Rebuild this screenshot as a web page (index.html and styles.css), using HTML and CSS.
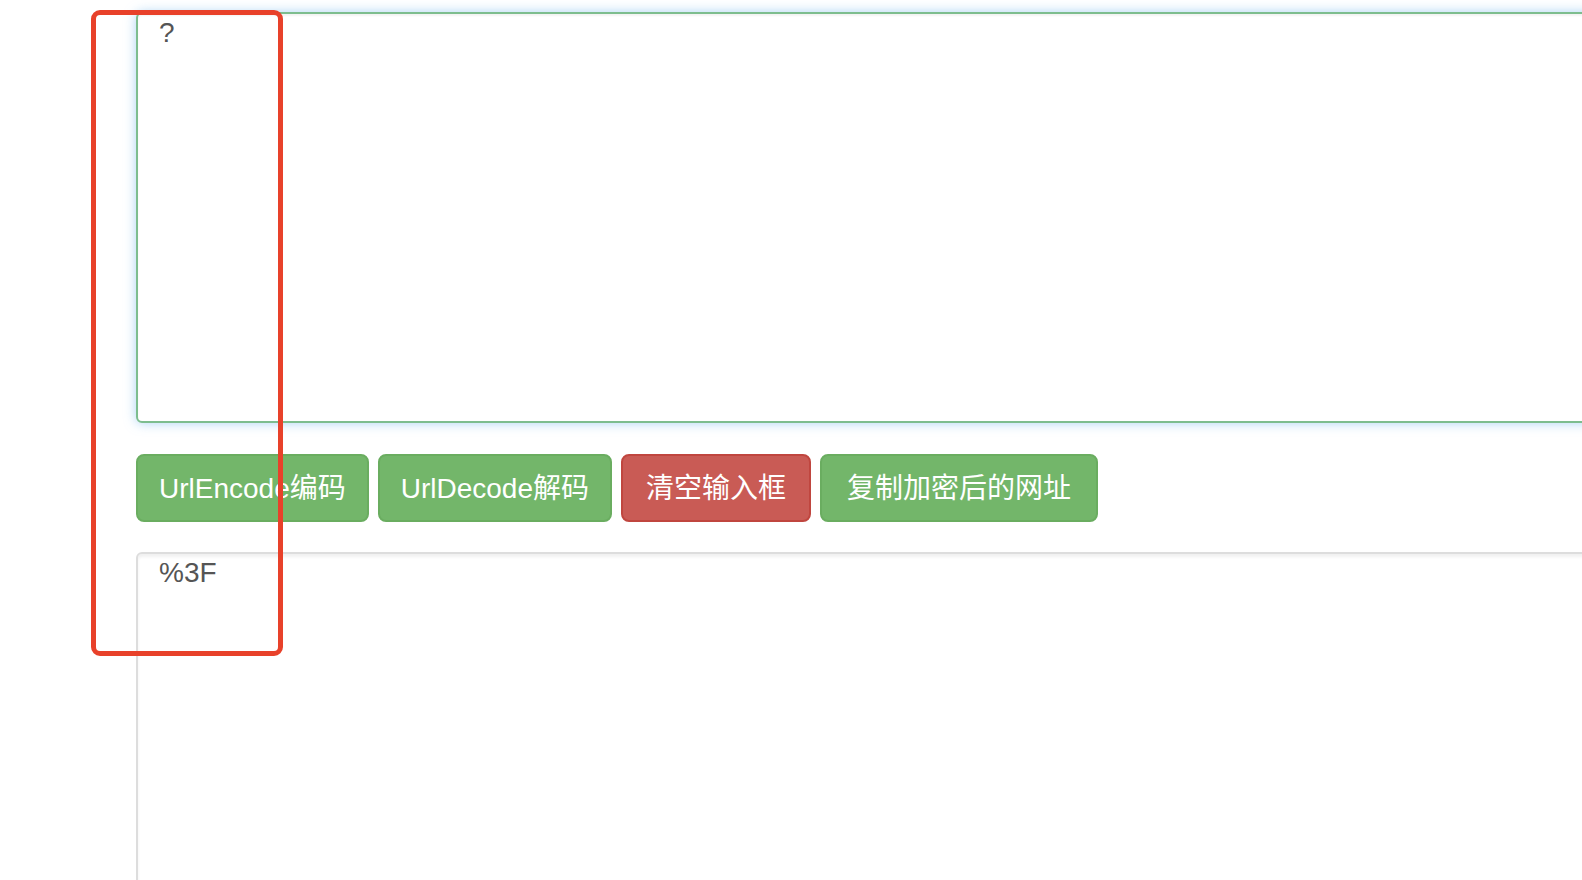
FILE: index.html
```html
<!DOCTYPE html>
<html>
<head>
  <meta charset="UTF-8">
  <title>UrlEncode编码/解码</title>
  <link rel="stylesheet" href="styles.css">
</head>
<body>
  <div class="tool">
    <textarea class="box box-focus" id="src">?</textarea>

    <div class="actions">
      <button class="btn btn-ok" id="encBtn">UrlEncode编码</button>
      <button class="btn btn-ok" id="decBtn">UrlDecode解码</button>
      <button class="btn btn-clear" id="clearBtn">清空输入框</button>
      <button class="btn btn-ok" id="copyBtn">复制加密后的网址</button>
    </div>

    <textarea class="box box-out" id="dst">%3F</textarea>
  </div>

  <!-- 标注框 -->
  <div class="mark"></div>
</body>
</html>
```

FILE: styles.css
```css
html, body {
  margin: 0;
  height: 100%;
  overflow: hidden;
  background: #fff;
}
body {
  font-family: 'Liberation Sans', 'Noto Sans CJK SC', sans-serif;
}
.tool {
  padding: 12px 0 0 136px;
}
.box {
  display: block;
  width: 1500px;
  box-sizing: border-box;
  padding: 0 21px;
  font-family: 'Liberation Sans', 'Noto Sans CJK SC', sans-serif;
  font-size: 28px;
  line-height: 38px;
  color: #555;
  background: #fff;
  border-radius: 6px 0 0 6px;
  resize: none;
  outline: none;
}
.box-focus {
  height: 411px;
  border: 2px solid #7dbd8e;
  box-shadow: inset 0 2px 2px rgba(0,0,0,.05), 0 0 12px rgba(102,175,233,.55);
}
.box-out {
  height: 400px;
  border: 2px solid #ddd;
  box-shadow: inset 0 3px 3px rgba(0,0,0,.06);
}
.actions {
  display: flex;
  gap: 9px;
  margin: 31px 0 30px;
}
.btn {
  font-family: 'Liberation Sans', 'Noto Sans CJK SC', sans-serif;
  font-size: 28px;
  line-height: 36px;
  height: 68px;
  padding: 2px 21px 0;
  color: #fff;
  border-radius: 8px;
  cursor: pointer;
}
.btn-ok {
  background-color: #73b66a;
  border: 2px solid #6aad60;
}
.btn-clear {
  background-color: #c95b55;
  border: 2px solid #c0463f;
  padding: 2px 23px 0;
}
#copyBtn {
  padding: 2px 25px 0;
}
.mark {
  position: absolute;
  left: 91px;
  top: 10px;
  width: 182px;
  height: 636px;
  border: 5px solid #e8412a;
  border-radius: 9px;
}
```
